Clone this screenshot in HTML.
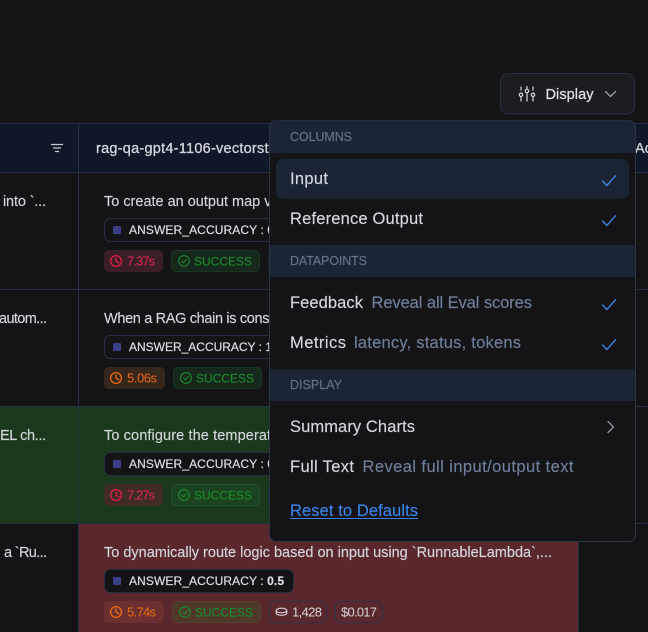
<!DOCTYPE html>
<html><head><meta charset="utf-8"><style>
html,body{margin:0;padding:0;background:#141416;width:648px;height:632px;overflow:hidden}
svg{display:block;font-family:"Liberation Sans",sans-serif}
.t{font-size:14.5px;fill:#d3d6db;stroke:#d3d6db;stroke-width:.15}
.m{font-size:16.5px;fill:#d5d8dd;stroke:#d5d8dd;stroke-width:.15}
.d{font-size:16.5px;fill:#6d7f99;stroke:#6d7f99;stroke-width:.15}
.s{font-size:12.5px;fill:#64748b;stroke:#64748b;stroke-width:.15}
.c{font-size:12px;fill:#dcdfe3;stroke:#dcdfe3;stroke-width:.2}
.b{font-size:13px}
.g{font-size:12px;stroke:#1c8a2e;stroke-width:.15}
.o{fill:none;stroke-linecap:round;stroke-linejoin:round}
</style></head><body>
<svg width="648" height="632" viewBox="0 0 648 632" xmlns="http://www.w3.org/2000/svg">
<defs>
<g id="clock" class="o" stroke-width="1.3"><circle cx="6" cy="7" r="5.4"/><path d="M6 4V7L8.800 8.800"/></g>
<g id="ok" class="o" stroke-width="1.1"><circle cx="5.5" cy="5.5" r="5.300"/><path d="M3.300 5.700L5 7.300L7.800 4"/></g>
<path id="chk" class="o" d="M0.500 6L4.800 10.500L13.500 0.800" stroke="#3b82e6" stroke-width="1.400"/>
</defs>

<rect width="648" height="632" fill="#141416"/>
<!-- header -->
<rect x="0" y="123" width="648" height="50" fill="#101828"/>
<!-- row fills -->
<rect x="0" y="407" width="578" height="116" fill="#1a381c"/>
<rect x="79" y="524" width="499" height="108" fill="#5a282c"/>
<!-- grid -->
<g fill="#253044">
<rect x="0" y="123" width="648" height="1"/>
<rect x="0" y="172" width="648" height="1"/>
<rect x="0" y="289" width="648" height="1"/>
<rect x="0" y="406" width="648" height="1"/>
<rect x="0" y="523" width="648" height="1"/>
<rect x="78" y="123" width="1" height="509"/>
<rect x="578" y="173" width="1" height="459"/>
</g>
<path class="o" d="M51.500 144.500H62.500M53.500 148H60.500M55.500 151.500H58.500" stroke="#c5c9d0" stroke-width="1.300"/>
<text x="96" y="153" class="t" style="stroke-width:.3" textLength="172.500" lengthAdjust="spacing">rag-qa-gpt4-1106-vectorst</text>
<text x="635" y="153" class="t" style="stroke-width:.3" textLength="17" lengthAdjust="spacing">Ac</text>

<!-- left cells -->
<text x="3" y="206" class="t" textLength="43" lengthAdjust="spacing">into `...</text>
<text x="-1" y="323" class="t" textLength="48" lengthAdjust="spacing">autom...</text>
<text x="0" y="440" class="t" textLength="46" lengthAdjust="spacing">EL ch...</text>
<text x="4" y="557" class="t" textLength="43" lengthAdjust="spacing">a `Ru...</text>

<!-- row 1 -->
<text x="104" y="206" class="t" textLength="167.500" lengthAdjust="spacing">To create an output map v</text>
<rect x="104.500" y="218.500" width="200" height="23" rx="6" fill="#141416" stroke="#253044"/>
<rect x="113" y="226" width="8" height="8" rx="1" fill="#3b3f85"/>
<text x="129" y="234" class="c" textLength="145" lengthAdjust="spacing">ANSWER_ACCURACY : 0</text>
<rect x="104" y="250" width="59" height="22" rx="5" fill="#3a1f27"/>
<use href="#clock" x="110" y="254" stroke="#e11d48"/>
<text x="127" y="265.500" class="b" fill="#e0294f" textLength="28" lengthAdjust="spacing">7.37s</text>
<rect x="171.500" y="250.500" width="88" height="21" rx="5" fill="#16281b" stroke="#1c3522"/>
<use href="#ok" x="178.500" y="255.500" stroke="#1c8a2e"/>
<text x="194" y="265.500" class="g" fill="#1c8a2e" textLength="58" lengthAdjust="spacing">SUCCESS</text>
<rect x="268" y="250" width="10" height="22" rx="5" fill="#1b2433"/>

<!-- row 2 -->
<text x="104" y="323" class="t" textLength="165.500" lengthAdjust="spacing">When a RAG chain is cons</text>
<rect x="104.500" y="335.500" width="200" height="23" rx="6" fill="#141416" stroke="#253044"/>
<rect x="113" y="343" width="8" height="8" rx="1" fill="#3b3f85"/>
<text x="129" y="351" class="c" textLength="143" lengthAdjust="spacing">ANSWER_ACCURACY : 1</text>
<rect x="104" y="367" width="61" height="22" rx="5" fill="#37261c"/>
<use href="#clock" x="110" y="371" stroke="#ea6a12"/>
<text x="127" y="382.500" class="b" fill="#ea6a12" textLength="30" lengthAdjust="spacing">5.06s</text>
<rect x="173.500" y="367.500" width="88" height="21" rx="5" fill="#16281b" stroke="#1c3522"/>
<use href="#ok" x="180.500" y="372.500" stroke="#1c8a2e"/>
<text x="196" y="382.500" class="g" fill="#1c8a2e" textLength="58" lengthAdjust="spacing">SUCCESS</text>

<!-- row 3 -->
<text x="104" y="440" class="t" textLength="163" lengthAdjust="spacing">To configure the tempera</text>
<text x="267" y="440" class="t">t</text>
<rect x="104.500" y="452.500" width="200" height="23" rx="6" fill="#141416" stroke="#253044"/>
<rect x="113" y="460" width="8" height="8" rx="1" fill="#3b3f85"/>
<text x="129" y="468" class="c" textLength="145" lengthAdjust="spacing">ANSWER_ACCURACY : 0</text>
<rect x="104" y="484" width="59" height="22" rx="5" fill="#412c25"/>
<use href="#clock" x="110" y="488" stroke="#e11d48"/>
<text x="127" y="499.500" class="b" fill="#e0294f" textLength="28" lengthAdjust="spacing">7.27s</text>
<rect x="171.500" y="484.500" width="88" height="21" rx="5" fill="#1c431f" stroke="#22502a"/>
<use href="#ok" x="178.500" y="489.500" stroke="#1c8a2e"/>
<text x="194" y="499.500" class="g" fill="#1c8a2e" textLength="58" lengthAdjust="spacing">SUCCESS</text>
<rect x="268" y="484" width="10" height="22" rx="5" fill="#1f2b40"/>

<!-- row 4 -->
<text x="104" y="557" class="t" textLength="448" lengthAdjust="spacing">To dynamically route logic based on input using `RunnableLambda`,...</text>
<rect x="104.500" y="569.500" width="189" height="23" rx="6" fill="#141416" stroke="#253044"/>
<rect x="113" y="577" width="8" height="8" rx="1" fill="#3b3f85"/>
<text x="129" y="585" class="c" textLength="155" lengthAdjust="spacing">ANSWER_ACCURACY : <tspan font-weight="700">0.5</tspan></text>
<rect x="104" y="601" width="60" height="22" rx="5" fill="#6c3030"/>
<use href="#clock" x="110" y="605" stroke="#ea6a12"/>
<text x="127" y="616.500" class="b" fill="#ea6a12" textLength="29" lengthAdjust="spacing">5.74s</text>
<rect x="172.500" y="601.500" width="88" height="21" rx="5" fill="#4e3828" stroke="#55402c"/>
<use href="#ok" x="179.500" y="606.500" stroke="#1c8a2e"/>
<text x="195" y="616.500" class="g" fill="#1c8a2e" textLength="58" lengthAdjust="spacing">SUCCESS</text>
<rect x="269.500" y="601.500" width="57" height="21" rx="5" fill="none" stroke="#2d3348"/>
<g class="o" stroke="#d8d5d8" stroke-width="1.100"><ellipse cx="281.500" cy="610.500" rx="5.300" ry="2.300"/><path d="M276.200 610.500V613c0 1.300 2.300 2.300 5.300 2.300s5.300-1 5.300-2.300V610.500"/></g>
<text x="292" y="616.500" class="b" fill="#d9d5d8" textLength="30" lengthAdjust="spacing">1,428</text>
<rect x="335.500" y="601.500" width="47" height="21" rx="5" fill="none" stroke="#2d3348"/>
<text x="341" y="616.500" class="b" fill="#d9d5d8" textLength="36" lengthAdjust="spacing">$0.017</text>

<!-- Display button -->
<rect x="500.500" y="73.500" width="134" height="40.500" rx="8" fill="#1c1d21" stroke="#253044"/>
<g class="o" stroke="#d6d9de" stroke-width="1.200">
<path d="M521 87V90M521 97V101M527 86.500V88.500M527 93.500V101M533 87V90M533 97V101"/>
<circle cx="521" cy="94.800" r="1.700"/><circle cx="527" cy="91" r="1.700"/><circle cx="533" cy="94.800" r="1.700"/>
</g>
<text x="545.500" y="99" style="font-size:14.500px;stroke:#dfe1e5;stroke-width:.25" fill="#dfe1e5" textLength="48" lengthAdjust="spacing">Display</text>
<path class="o" d="M605.500 91.500L610.500 96.500L615.500 91.500" stroke="#b9bdc4" stroke-width="1.100"/>

<!-- Menu -->
<rect x="269.500" y="120.500" width="366" height="421" rx="7" fill="#141416" stroke="#2a3548"/>
<path d="M270 153V127.500a7 7 0 0 1 7-7H628a7 7 0 0 1 7 7V153Z" fill="#1c2534"/>
<rect x="270" y="245" width="365" height="32" fill="#1c2534"/>
<rect x="270" y="369" width="365" height="32" fill="#1c2534"/>
<text x="290" y="141" class="s" textLength="62" lengthAdjust="spacing">COLUMNS</text>
<text x="290" y="265" class="s" textLength="77" lengthAdjust="spacing">DATAPOINTS</text>
<text x="290" y="389" class="s" textLength="52" lengthAdjust="spacing">DISPLAY</text>
<rect x="276" y="159" width="353" height="40" rx="7" fill="#1b2433"/>
<text x="290" y="184" class="m" textLength="38" lengthAdjust="spacing">Input</text>
<text x="290" y="224" class="m" textLength="133" lengthAdjust="spacing">Reference Output</text>
<text x="290" y="308" class="m" textLength="73" lengthAdjust="spacing">Feedback</text>
<text x="371.500" y="308" class="d" textLength="160.500" lengthAdjust="spacing">Reveal all Eval scores</text>
<text x="290" y="348" class="m" textLength="56" lengthAdjust="spacing">Metrics</text>
<text x="354" y="348" class="d" textLength="167" lengthAdjust="spacing">latency, status, tokens</text>
<text x="290" y="432" class="m" textLength="125" lengthAdjust="spacing">Summary Charts</text>
<text x="290" y="472" class="m" textLength="64" lengthAdjust="spacing">Full Text</text>
<text x="362.500" y="472" class="d" textLength="211" lengthAdjust="spacing">Reveal full input/output text</text>
<text x="290" y="516" class="m" style="fill:#3b82e6;stroke:#3b82e6" textLength="128" lengthAdjust="spacing">Reset to Defaults</text>
<rect x="290" y="518" width="128" height="1" fill="#3b82e6"/>
<use href="#chk" x="602" y="175"/>
<use href="#chk" x="602" y="215"/>
<use href="#chk" x="602" y="299"/>
<use href="#chk" x="602" y="339"/>
<path class="o" d="M608 421.500L613.500 427L608 432.500" stroke="#a8adb5" stroke-width="1.200"/>
</svg>
</body></html>
